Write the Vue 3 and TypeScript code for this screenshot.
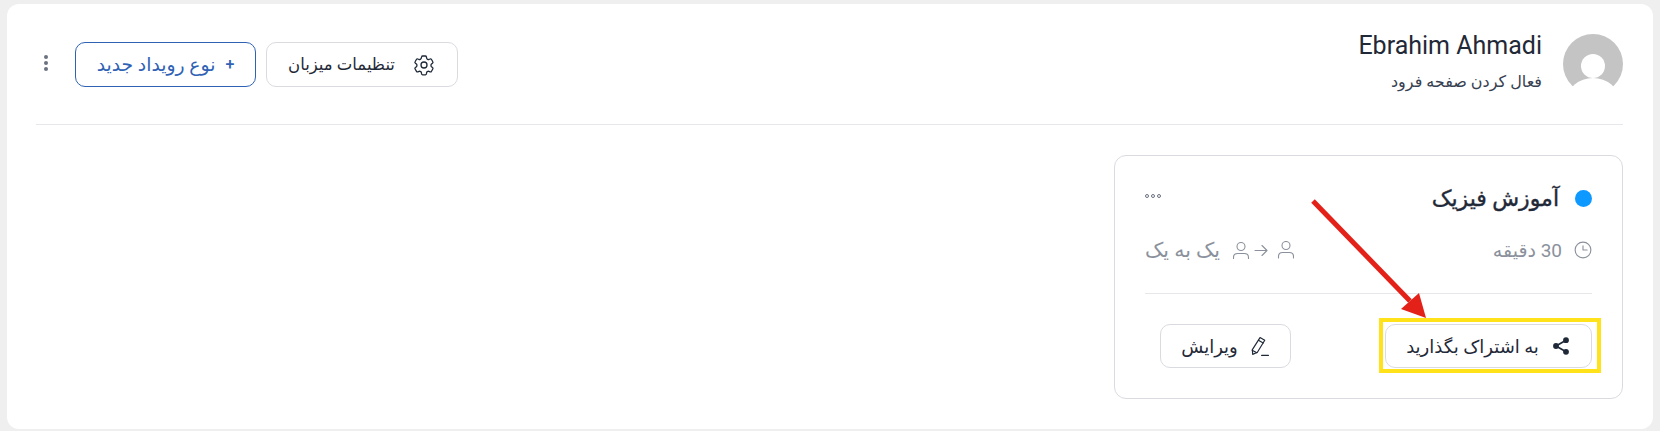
<script setup lang="ts">
const title = 'آموزش فیزیک'
</script>

<template>
  <div class="page">
    <main class="panel" dir="rtl">
      <header class="top">
        <div class="profile">
          <svg class="avatar" viewBox="0 0 60 60" width="60" height="60">
            <circle cx="30" cy="30" r="30" fill="#c4c4c4" />
            <circle cx="30" cy="32" r="12" fill="#fff" />
            <ellipse cx="30" cy="66" rx="26" ry="22" fill="#fff" />
          </svg>
          <div class="who">
            <div class="name" dir="ltr">Ebrahim Ahmadi</div>
            <div class="sub">فعال کردن صفحه فرود</div>
          </div>
        </div>
        <div class="actions">
          <button class="btn settings">
            <svg viewBox="0 0 24 24" width="24" height="24" fill="none" stroke="#1f2937" stroke-width="1.300" stroke-linecap="round" stroke-linejoin="round">
              <path d="M9.6 3.9c.1-.5.5-.9 1.100-.9h2.600c.5 0 1 .4 1.100.9l.2 1.300c.1.400.3.700.7.900l.5.300c.3.200.7.200 1.100.100l1.200-.5c.5-.2 1.100 0 1.400.5l1.300 2.300c.3.500.2 1.100-.3 1.400l-1 .8c-.3.300-.5.700-.5 1.100v.6c0 .4.200.8.500 1.100l1 .8c.4.300.6.900.3 1.400l-1.300 2.300c-.3.500-.9.700-1.400.5l-1.200-.5c-.4-.100-.8-.100-1.100.100l-.5.300c-.4.200-.6.500-.7.900l-.2 1.300c-.1.500-.6.900-1.100.9h-2.600c-.6 0-1-.4-1.100-.9l-.2-1.300c-.1-.4-.3-.7-.7-.9l-.5-.3c-.3-.2-.7-.2-1.100-.1l-1.200.5c-.5.200-1.100 0-1.400-.5L3.100 16c-.3-.5-.2-1.100.3-1.400l1-.8c.3-.3.5-.7.500-1.100v-.6c0-.4-.2-.8-.5-1.100l-1-.8c-.5-.3-.6-.9-.3-1.400l1.300-2.300c.3-.5.900-.7 1.400-.5l1.200.5c.4.100.8.100 1.100-.1l.5-.3c.4-.2.600-.5.700-.9z" />
              <circle cx="12" cy="12" r="3" />
            </svg>
            <span>تنظیمات میزبان</span>
          </button>
          <button class="btn create">
            <span class="plus">+</span>
            <span>نوع رویداد جدید</span>
          </button>
          <div class="dots"><i></i><i></i><i></i></div>
        </div>
      </header>

      <section class="event">
        <div class="event-head">
          <div class="event-title">
            <span class="dot"></span>
            <h3>{{ title }}</h3>
          </div>
          <div class="more"><i></i><i></i><i></i></div>
        </div>

        <div class="meta">
          <div class="meta-item">
            <svg viewBox="0 0 24 24" width="18" height="18" fill="none" stroke="#8b919c" stroke-width="1.500" stroke-linecap="round" stroke-linejoin="round">
              <circle cx="12" cy="12" r="10.500" />
              <path d="M12 6.500V12h5.500" />
            </svg>
            <span>30 دقیقه</span>
          </div>
          <div class="meta-item wide">
            <svg viewBox="0 0 61 18" width="61" height="18" fill="none" stroke="#8b919c" stroke-width="1.100" stroke-linecap="round" stroke-linejoin="round">
              <circle cx="8" cy="5.500" r="4" />
              <path d="M.5 18v-1.500c0-2.500 1.500-4 4-4h7c2.500 0 4 1.500 4 4V18" />
              <path d="M22 9.500h12M29 4.500l5 5-5 5" />
              <circle cx="53" cy="4.500" r="4" />
              <path d="M45.500 17v-1.500c0-2.500 1.500-4 4-4h7c2.500 0 4 1.500 4 4V17" />
            </svg>
            <span>یک به یک</span>
          </div>
        </div>

        <div class="event-foot">
          <div class="share-wrap">
            <button class="btn share">
              <svg viewBox="0 0 24 24" width="20" height="20" fill="#1f2937" stroke="#1f2937" stroke-width="2">
                <circle cx="18" cy="5" r="2.500" />
                <circle cx="6" cy="12" r="2.500" />
                <circle cx="18" cy="19" r="2.500" />
                <path d="M6 12l12-7M6 12l12 7" fill="none" />
              </svg>
              <span>به اشتراک بگذارید</span>
            </button>
            <div class="highlight"></div>
          </div>
          <button class="btn edit">
            <svg viewBox="0 0 20 20" width="21" height="21" fill="none" stroke="#1f2937" stroke-width="1.100" stroke-linejoin="round" stroke-linecap="round">
              <path d="M10.500 1.500l4.500 2.500-7 11.500-4.500 2-.3-4.500z" />
              <path d="M9 4l4.500 2.700M3 13.500l4.500 2.500" />
              <path d="M12 18.500h6.500" />
            </svg>
            <span>ویرایش</span>
          </button>
        </div>
      </section>

      <svg class="arrow" viewBox="0 0 120 125" width="120" height="125">
        <path d="M2 3L99 103" stroke="#e32119" stroke-width="5" fill="none" />
        <path d="M115 120L90 111L108 95Z" fill="#e32119" />
      </svg>
    </main>
  </div>
</template>

<style scoped>
.page {
  height: 431px;
  padding: 4px 7px 2px;
  box-sizing: border-box;
  background: #efefef;
  font-family: Roboto, "Noto Sans", "DejaVu Sans", sans-serif;
}

.panel {
  position: relative;
  height: 100%;
  box-sizing: border-box;
  padding: 30px 30px 0 29px;
  background: #fff;
  border-radius: 12px;
}

.top {
  height: 90px;
  display: flex;
  justify-content: space-between;
  border-bottom: 1px solid #e5e7eb;
}

.profile {
  display: flex;
  gap: 21px;
}

.avatar {
  display: block;
}

.who {
  margin-top: -4px;
}

.name {
  font-size: 25px;
  line-height: 32px;
  color: #1f2937;
  text-align: right;
}

.sub {
  margin-top: 10px;
  font-size: 16px;
  line-height: 20px;
  color: #374151;
}

.actions {
  display: flex;
  align-items: flex-start;
  gap: 10px;
  padding-top: 8px;
}

.btn {
  display: inline-flex;
  align-items: center;
  justify-content: center;
  height: 45px;
  box-sizing: border-box;
  background: #fff;
  border: 1px solid #d9dbe0;
  border-radius: 10px;
  font: inherit;
  font-size: 18px;
  color: #1f2937;
}

.settings {
  width: 192px;
  gap: 17px;
  font-size: 16.500px;
}

.create {
  width: 181px;
  gap: 10px;
  border-color: #2f62b5;
  color: #2f62b5;
  font-size: 18.800px;
}

.plus {
  font-size: 16px;
  font-weight: 500;
}

.dots {
  display: flex;
  flex-direction: column;
  gap: 2px;
  margin: 0 17px 0 8px;
  padding-top: 13px;
}

.dots i {
  width: 4px;
  height: 4px;
  border-radius: 50%;
  background: #6b7280;
}

.event {
  width: 509px;
  height: 244px;
  box-sizing: border-box;
  margin-top: 30px;
  padding: 28px 30px 0;
  border: 1px solid #d9dbe0;
  border-radius: 12px;
}

.event-head {
  display: flex;
  align-items: center;
  justify-content: space-between;
  height: 28px;
}

.event-title {
  display: flex;
  align-items: center;
  gap: 16px;
}

.dot {
  width: 17px;
  height: 17px;
  border-radius: 50%;
  background: #0d99ff;
}

h3 {
  margin: 0;
  font-size: 22px;
  font-weight: 400;
  -webkit-text-stroke: 0.4px #1f2937;
  color: #1f2937;
}

.more {
  display: flex;
  gap: 2px;
  margin-top: -4px;
}

.more i {
  width: 4px;
  height: 4px;
  box-sizing: border-box;
  border: 1px solid #6b7280;
  border-radius: 50%;
}

.meta {
  display: flex;
  justify-content: space-between;
  height: 82px;
  padding-top: 27px;
  box-sizing: border-box;
  border-bottom: 1px solid #e5e7eb;
  color: #8b919c;
}

.meta-item {
  display: flex;
  align-items: center;
  align-self: flex-start;
  gap: 12px;
  font-size: 19px;
  height: 22px;
}

.wide {
  font-size: 20.500px;
  gap: 13px;
}

.event-foot {
  display: flex;
  justify-content: space-between;
  padding-top: 30px;
  padding-left: 15px;
}

.share-wrap {
  position: relative;
}

.share {
  width: 207px;
  height: 44px;
  gap: 12px;
}

.edit {
  width: 131px;
  height: 44px;
  gap: 11px;
}

.highlight {
  position: absolute;
  inset: -6px -9px -5px -6px;
  border: 4px solid #ffe21a;
  pointer-events: none;
}

.arrow {
  position: absolute;
  left: 1304px;
  top: 194px;
}
</style>

<style>
html, body {
  margin: 0;
  background: #efefef;
}
</style>
